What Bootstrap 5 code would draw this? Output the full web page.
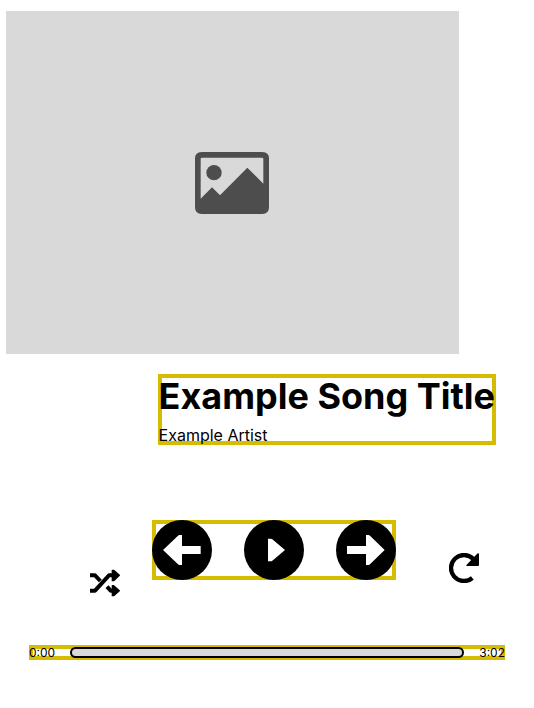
<!DOCTYPE html>
<html lang="en">
<head>
<meta charset="utf-8">
<meta name="viewport" content="width=device-width, initial-scale=1">
<title>Music player</title>
<link rel="stylesheet" href="https://cdn.jsdelivr.net/npm/bootstrap@5.3.0/dist/css/bootstrap.min.css">
<style>
  body { font-family: Inter, "Liberation Sans", sans-serif; color: #000; background: #fff; }
  svg { display: block; }
  .player { max-width: 534px; padding-bottom: 48px; }
  .cover { max-width: 453px; aspect-ratio: 453 / 343; margin: 11px 6px 0; padding-right: 2px; background: #d9d9d9; }
  .outlined { box-shadow: inset 0 0 0 4px #d6bc00; }
  .track-row { padding: 20px 38px 0 6px; }
  .track-info { padding: 0 1px; }
  .song-title { font-size: 36px; line-height: 44px; }
  .song-artist { font-size: 16px; line-height: 19px; margin-top: 8px; }
  .control-row { padding: 75px 55px 0 90px; }
  .transport { gap: 32px; margin-left: 32px; }
  .icon-button { color: #000; line-height: 1; }
  .shuffle { margin-top: 49px; }
  .repeat { margin-top: 33px; }
  .timeline { margin: 48px 29px 0; gap: 15px; font-size: 12px; line-height: 15px; }
  .seek { appearance: none; -webkit-appearance: none; min-width: 0; height: 11px; margin: 0;
          border: 2px solid #000; border-radius: 6px; background: #d9d9d9; }
  .seek::-webkit-slider-thumb { -webkit-appearance: none; width: 1px; height: 7px; background: transparent; }
  .seek::-moz-range-thumb { width: 1px; height: 7px; border: 0; background: transparent; }
</style>
</head>
<body>
<main class="player mx-auto overflow-hidden">
  <div class="cover d-flex align-items-center justify-content-center" role="img" aria-label="Album cover">
    <svg width="74" height="62" viewBox="0 0 222 186" fill="#4d4d4d" aria-hidden="true">
      <path fill-rule="evenodd" d="M20 0H202Q222 0 222 20V166Q222 186 202 186H20Q0 186 0 166V20Q0 0 20 0ZM21 17Q17 17 17 21V140L51 106L75 130L157 47L205 95V21Q205 17 201 17Z"/>
      <circle cx="57" cy="62" r="23"/>
    </svg>
  </div>

  <div class="track-row d-flex justify-content-end">
    <div class="track-info outlined">
      <h1 class="song-title fw-bold mb-0">Example Song Title</h1>
      <p class="song-artist mb-0">Example Artist</p>
    </div>
  </div>

  <div class="control-row d-flex align-items-start">
    <button type="button" class="icon-button shuffle btn p-0 border-0" aria-label="Shuffle">
      <svg width="30" height="28" viewBox="0 0 90 84" fill="none" stroke="currentColor" stroke-width="12" stroke-linejoin="round">
        <path d="M0 19H15L31 36M0 65H15L57 19H76M51 53L62 65H76"/>
        <path fill="currentColor" stroke-width="4" d="M67 4L71 4L88 19L71 35L67 35ZM67 50L71 50L88 65L71 80L67 80Z"/>
      </svg>
    </button>
    <div class="transport outlined d-flex">
      <button type="button" class="icon-button btn p-0 border-0 rounded-circle" aria-label="Previous">
        <svg width="60" height="60" viewBox="0 0 180 180">
          <circle cx="90" cy="90" r="90"/>
          <path fill="#fff" d="M33 90L78 47Q80 45 83 45H90V78H146V102H90V135H83Q80 135 78 133Z"/>
        </svg>
      </button>
      <button type="button" class="icon-button btn p-0 border-0 rounded-circle" aria-label="Play">
        <svg width="60" height="60" viewBox="0 0 180 180">
          <circle cx="90" cy="90" r="90"/>
          <path fill="#fff" d="M72 56H80Q83 56 85 58L123 90L85 122Q83 124 80 124H72Z"/>
        </svg>
      </button>
      <button type="button" class="icon-button btn p-0 border-0 rounded-circle" aria-label="Next">
        <svg width="60" height="60" viewBox="0 0 180 180">
          <circle cx="90" cy="90" r="90"/>
          <path fill="#fff" d="M146 90L102 47Q100 45 97 45H90V78H33V102H90V135H97Q100 135 102 133Z"/>
        </svg>
      </button>
    </div>
    <button type="button" class="icon-button repeat btn p-0 border-0 ms-auto" aria-label="Repeat">
      <svg width="30" height="30" viewBox="0 0 90 90">
        <path d="M70 75A39 39 0 1 1 73 18" fill="none" stroke="currentColor" stroke-width="13"/>
        <path d="M86 1Q90 -1 90 4V36Q90 39 87 39H55Q50 39 53 35Z"/>
      </svg>
    </button>
  </div>

  <div class="timeline outlined d-flex align-items-center">
    <label for="seek">0:00</label>
    <input type="range" id="seek" class="seek flex-fill" min="0" max="182" value="0">
    <span>3:02</span>
  </div>
</main>
<script src="https://cdn.jsdelivr.net/npm/bootstrap@5.3.0/dist/js/bootstrap.bundle.min.js"></script>
</body>
</html>
